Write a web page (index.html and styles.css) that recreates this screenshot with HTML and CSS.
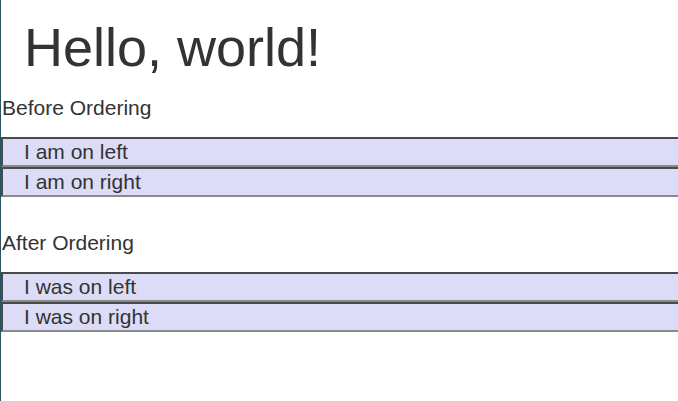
FILE: index.html
```html
<!DOCTYPE html>
<html>
<head>
<meta charset="utf-8">
<link rel="stylesheet" href="styles.css">
</head>
<body>
<div class="page">
  <h1 class="title">Hello, world!</h1>
  <section class="group">
    <div class="label">Before Ordering</div>
    <div class="list">
      <div class="row">I am on left</div>
      <div class="row">I am on right</div>
    </div>
  </section>
  <section class="group">
    <div class="label">After Ordering</div>
    <div class="list">
      <div class="row">I was on left</div>
      <div class="row">I was on right</div>
    </div>
  </section>
</div>
</body>
</html>
```
FILE: styles.css
```css
html, body {
  margin: 0;
  padding: 0;
  background: #fff;
  overflow: hidden;
}
.page {
  min-height: 100vh;
  box-sizing: border-box;
  border-left: 1px solid #2b5366;
  overflow: hidden;
  font-family: "Liberation Sans", Arial, sans-serif;
  color: #333;
  padding-top: 16px;
}
.title {
  margin: 0;
  padding-left: 23px;
  font-size: 54px;
  font-weight: normal;
  line-height: 62px;
}
.group {
  margin-bottom: 34px;
}
.label {
  margin-top: 18px;
  padding-left: 1px;
  font-size: 21px;
  line-height: 24px;
}
.list {
  margin-top: 17px;
  margin-right: -6px;
}
.row {
  background: #dcdcf7;
  border: 2px solid;
  border-color: #4a4a4a #8a8a8a #8a8a8a #4a4a4a;
  padding: 1px 0 1px 21px;
  font-size: 21px;
  line-height: 24px;
}
```
